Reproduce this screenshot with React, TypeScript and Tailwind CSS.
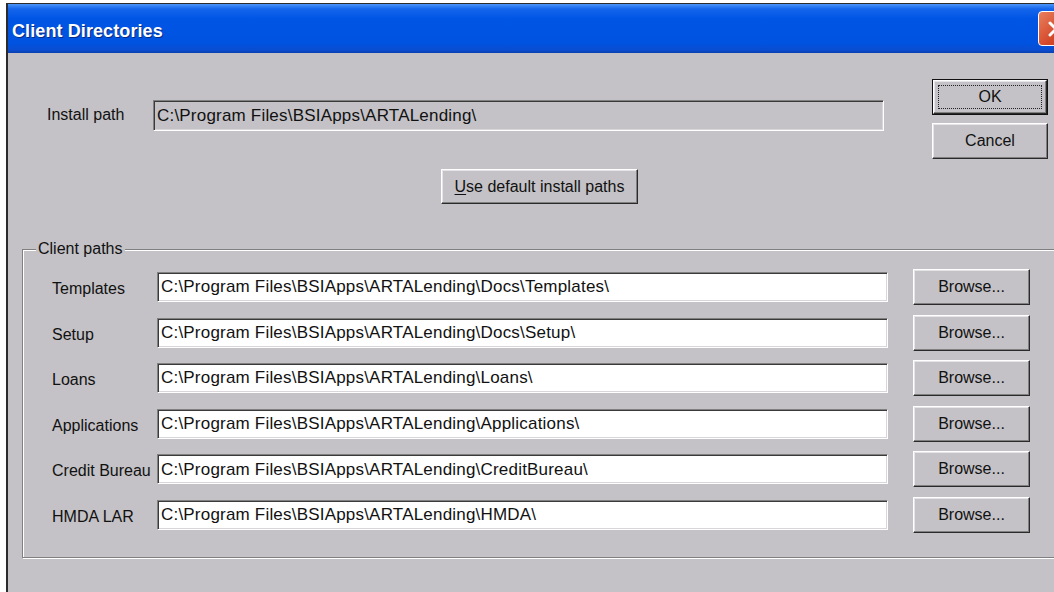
import React from 'react';

const font = "font-['Liberation_Sans',Arial,sans-serif]";

// classic 3D edges
const raised =
  'border border-t-white border-l-white border-b-[#2a2a2a] border-r-[#2a2a2a] shadow-[inset_-1px_-1px_0_#808080,inset_1px_1px_0_#e6e4e8]';
const sunken =
  'border border-t-[#808080] border-l-[#808080] border-b-white border-r-white shadow-[inset_1px_1px_0_#3a3a3a,inset_-1px_-1px_0_#d8d6da]';

interface PathRow {
  label: string;
  value: string;
}

const rows: PathRow[] = [
  { label: 'Templates', value: 'C:\\Program Files\\BSIApps\\ARTALending\\Docs\\Templates\\' },
  { label: 'Setup', value: 'C:\\Program Files\\BSIApps\\ARTALending\\Docs\\Setup\\' },
  { label: 'Loans', value: 'C:\\Program Files\\BSIApps\\ARTALending\\Loans\\' },
  { label: 'Applications', value: 'C:\\Program Files\\BSIApps\\ARTALending\\Applications\\' },
  { label: 'Credit Bureau', value: 'C:\\Program Files\\BSIApps\\ARTALending\\CreditBureau\\' },
  { label: 'HMDA LAR', value: 'C:\\Program Files\\BSIApps\\ARTALending\\HMDA\\' },
];

const Button: React.FC<{ className?: string; children: React.ReactNode }> = ({ className = '', children }) => (
  <button className={`${raised} bg-[#c4c2c6] text-[16px] text-[#111] flex items-center justify-center ${className}`}>
    {children}
  </button>
);

export default function App() {
  return (
    <div className={`w-[1054px] h-[592px] bg-white overflow-hidden pt-[3px] pl-[6px] ${font}`}>
      <div className="h-full flex flex-col border-t border-l-2 border-[#2b2b2b]">
        {/* title bar */}
        <div className="h-[49px] flex items-center pl-[4px] pt-[6px] bg-[linear-gradient(180deg,#4a95f8_0%,#1565ec_10%,#0055e5_30%,#0053e0_80%,#0a4cd0_94%,#0a3fb0_100%)]">
          <span className="text-white font-bold text-[18px] tracking-[0.1px] [text-shadow:1px_1px_0_#0a2a80]">
            Client Directories
          </span>
          <div className="ml-auto mr-[-19px] mt-[-6px] w-[35px] h-[35px] rounded-[4px] border border-white bg-[linear-gradient(135deg,#e8805e,#d4482a_60%,#c23a1e)] flex items-center justify-center">
            <svg width="20" height="20" viewBox="0 0 20 20">
              <path d="M4 4 L16 16 M16 4 L4 16" stroke="white" strokeWidth="3" strokeLinecap="round" />
            </svg>
          </div>
        </div>

        {/* dialog body */}
        <div className="flex-1 bg-[#c4c2c6] text-[16px] text-[#111]">
          <div className="flex items-start">
            <div className="pt-[47px] pl-[39px]">
              <div className="flex items-center">
                <span className="w-[106px] pb-[2px]">Install path</span>
                <div className={`${sunken} w-[731px] h-[31px] flex items-center pl-[3px] bg-[#c4c2c6] text-[17px] tracking-[0.2px]`}>
                  C:\Program Files\BSIApps\ARTALending\
                </div>
              </div>
              <Button className="ml-[394px] mt-[38px] w-[197px] h-[35px]">
                <span>
                  <span className="underline underline-offset-2">U</span>se default install paths
                </span>
              </Button>
            </div>
            <div className="ml-auto mr-[6px] pt-[26px] flex flex-col gap-[8px] w-[116px]">
              <div className="h-[36px] border border-[#111] p-0">
                <Button className="w-full h-full">
                  <span className="border border-dotted border-[#222] w-[104px] h-[24px] flex items-center justify-center">
                    OK
                  </span>
                </Button>
              </div>
              <Button className="w-full h-[36px]">Cancel</Button>
            </div>
          </div>

          {/* client paths group */}
          <div className="relative ml-[14px] mr-[-20px] mt-[45px] h-[309px] border border-[#808080] shadow-[1px_1px_0_white,inset_1px_1px_0_white]">
            <span className="absolute left-[13px] top-[-11px] px-[2px] bg-[#c4c2c6] leading-[20px]">Client paths</span>
            <div className="pt-[19px] pl-[29px] flex flex-col gap-[9.6px]">
              {rows.map((r) => (
                <div key={r.label} className="flex items-center h-[36px]">
                  <span className="w-[105px] pt-[4px]">{r.label}</span>
                  <div className={`${sunken} w-[731px] h-[30px] bg-white flex items-center pl-[3px] text-[17px] tracking-[0.2px]`}>
                    {r.value}
                  </div>
                  <Button className="ml-[25px] w-[117px] h-[36px]">Browse...</Button>
                </div>
              ))}
            </div>
          </div>
        </div>
      </div>
    </div>
  );
}
